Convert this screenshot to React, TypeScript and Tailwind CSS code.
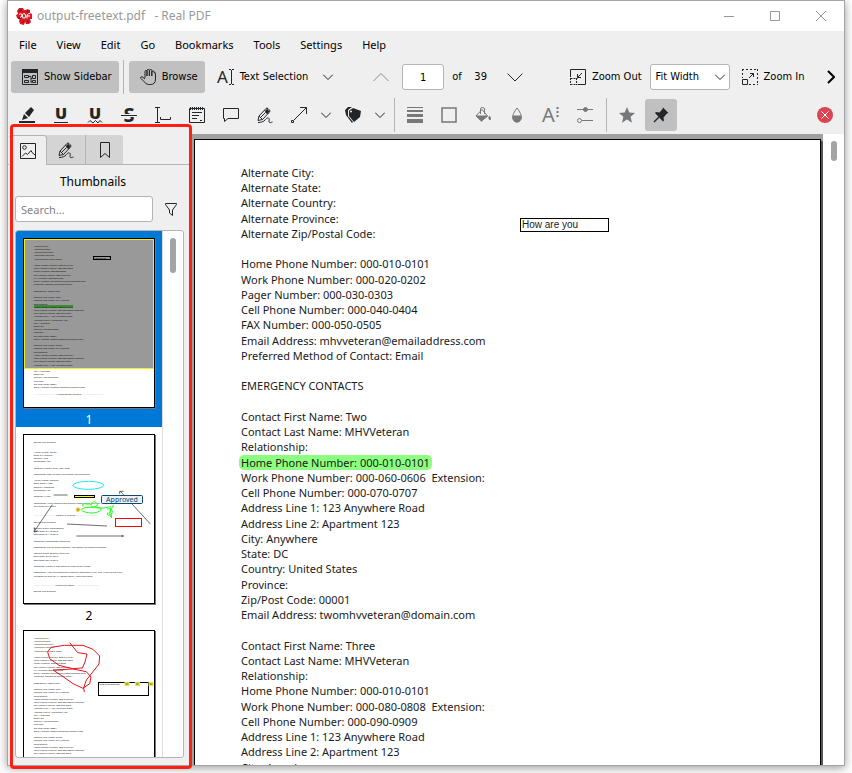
import type { ReactNode } from 'react';

const MENU = ['File', 'View', 'Edit', 'Go', 'Bookmarks', 'Tools', 'Settings', 'Help'];

const HIGHLIGHTED_LINE = 19;

const CONTACT_LINES = [
    'Alternate City:',
    'Alternate State:',
    'Alternate Country:',
    'Alternate Province:',
    'Alternate Zip/Postal Code:',
    '',
    'Home Phone Number: 000-010-0101',
    'Work Phone Number: 000-020-0202',
    'Pager Number: 000-030-0303',
    'Cell Phone Number: 000-040-0404',
    'FAX Number: 000-050-0505',
    'Email Address: mhvveteran@emailaddress.com',
    'Preferred Method of Contact: Email',
    '',
    'EMERGENCY CONTACTS',
    '',
    'Contact First Name: Two',
    'Contact Last Name: MHVVeteran',
    'Relationship:',
    'Home Phone Number: 000-010-0101',
    'Work Phone Number: 000-060-0606  Extension:',
    'Cell Phone Number: 000-070-0707',
    'Address Line 1: 123 Anywhere Road',
    'Address Line 2: Apartment 123',
    'City: Anywhere',
    'State: DC',
    'Country: United States',
    'Province:',
    'Zip/Post Code: 00001',
    'Email Address: twomhvveteran@domain.com',
    '',
    'Contact First Name: Three',
    'Contact Last Name: MHVVeteran',
    'Relationship:',
    'Home Phone Number: 000-010-0101',
    'Work Phone Number: 000-080-0808  Extension:',
    'Cell Phone Number: 000-090-0909',
    'Address Line 1: 123 Anywhere Road',
    'Address Line 2: Apartment 123',
    'City: Anywhere',
    'State: DC',
    'Country: United States',
    'Province:',
    'Zip/Post Code: 00001',
    'Email Address: threemhvveteran@domain.com',
];

// [baseline, text] pairs for the second page preview
const ALLERGY_LINES: [number, string][] = [
    [24, 'Source: Self-Entered'],
    [54, 'Allergy Name: Pollen'],
    [63, 'Date:          04/10/2010'],
    [72, 'Severity:     Mild'],
    [81, 'Diagnosed:   Yes'],
    [102, 'Reaction: Watery eyes, itchy nose'],
    [120, 'Comments: Took an over the counter antihistamine'],
    [138, 'Allergy Name: Peanuts'],
    [147, 'Date:          06/01/1980'],
    [159, 'Severity:     Moderate'],
    [168, 'Diagnosed:   Yes'],
    [186, 'Reaction: Hives'],
    [207, 'Comments: Avoid peanuts and peanut based foods, carry epi'],
    [216, 'and check the labels'],
    [243, '----------------------------- MEDICAL EVENTS -----------------------------'],
    [264, 'Source: Self-Entered'],
    [282, 'Medical Event:   Colonoscopy'],
    [291, 'Start Date:     01/12/2010'],
    [300, 'Stop Date:     01/12/2010'],
    [321, 'Response: Colonoscopy went well'],
    [339, 'Comments: Polyps were removed. The doctor did these exchanges'],
    [357, 'Medical Event:   Broken right arm'],
    [366, 'Start Date:     07/04/2012'],
    [378, 'Stop Date:     08/15/2012'],
    [396, 'Response: Placed in cast from my hand to my elbow'],
    [414, 'Comments: After the community hospital emergency visit, had X-rays at the clinic'],
    [426, 'Followed up with my VA doctor when I returned home'],
    [453, '---------------------------- IMMUNIZATIONS --------------------------------'],
    [471, 'Source: Self-Entered'],
];

function Icon({ children, className = 'text-[#232629]' }: { children: ReactNode; className?: string }) {
    return (
        <svg
            width="16"
            height="16"
            viewBox="0 0 16 16"
            fill="none"
            stroke="currentColor"
            aria-hidden="true"
            className={`shrink-0 overflow-visible font-['Noto_Sans',sans-serif] ${className}`}
        >
            {children}
        </svg>
    );
}

function Chevron({ up = false, muted = false }: { up?: boolean; muted?: boolean }) {
    return (
        <Icon className={muted ? 'text-[#8a8b8c]' : 'text-[#232629]'}>
            <path d={up ? 'M0.5 12 8 4.5 15.5 12' : 'M0.5 4.5 8 12 15.5 4.5'} />
        </Icon>
    );
}

function SmallChevron() {
    return (
        <svg width="10" height="6" viewBox="0 0 10 6" fill="none" stroke="#232629" aria-hidden="true">
            <path d="M0 0.5 5 5.5 10 0.5" />
        </svg>
    );
}

function AppLogo() {
    return (
        <svg width="17" height="17" viewBox="0 0 17 17" aria-hidden="true" className="shrink-0">
            <path
                d="M3 0h4l1 2h2l1-1 3 1v3l2 1v5h-2l1 3-2 2h-3l-1-2-1 3-4-1-1-3 1-2-3-1-1-3 2-1-1-3z"
                fill="#dc1822"
            />
            <path d="M3 3l3-1M11 3l2 1M2 10l3 1M13 14l-2-1M6 14l2 0" stroke="#9a0a14" strokeWidth="1.500" />
            <path
                d="M3 6.500q2-1.500 3 0T4 9.500M7 10.500q-1.500-4.500.5-5t2 2.500-2 2M11 10.500q-1-5 3-5M10.500 8H14"
                fill="none"
                stroke="#fff"
            />
        </svg>
    );
}

function PencilIcon() {
    return (
        <Icon>
            <path d="M1 13.500 2 9 9 1.500q1-1 2 0l1.500 1.500q1 1 0 2L5.500 12.500zM2 9l3.500 3.500M7.500 3l4 4M3.500 10.500l5-5" />
            <path d="M8 5 10 7 12.500 4.500 10 1.500z" fill="currentColor" stroke="none" />
            <path d="M1 15.500c3 0 6-1 7-2.500s3-3 4-1.500-1 3.500.5 4 2-.5 3-.5" />
        </Icon>
    );
}

function TitleBar() {
    return (
        <header className="flex h-[30px] shrink-0 items-center bg-white pl-2 text-[#999999]">
            <AppLogo />
            <h1 className="ml-1 text-[12px] leading-5 whitespace-pre">output-freetext.pdf   - Real PDF</h1>
            <div className="ml-auto flex h-full">
                <button type="button" aria-label="Minimize" className="flex w-[46px] items-center justify-center">
                    <svg width="10" height="10" fill="none" stroke="currentColor">
                        <path d="M0 5.500h10" />
                    </svg>
                </button>
                <button type="button" aria-label="Maximize" className="flex w-[46px] items-center justify-center">
                    <svg width="10" height="10" fill="none" stroke="currentColor">
                        <path d="M.5.500h9v9h-9z" />
                    </svg>
                </button>
                <button type="button" aria-label="Close" className="flex w-[46px] items-center justify-center">
                    <svg width="10" height="10" fill="none" stroke="currentColor">
                        <path d="M0 0 10 10M10 0 0 10" />
                    </svg>
                </button>
            </div>
        </header>
    );
}

function MenuBar() {
    return (
        <nav className="flex h-[27px] shrink-0 items-center pl-px">
            {MENU.map((item) => (
                <button key={item} type="button" className="px-[10px] text-[11px] leading-4">
                    {item}
                </button>
            ))}
        </nav>
    );
}

function Separator() {
    return (
        <div className="flex h-[34px] w-[6px] shrink-0 justify-center">
            <div className="w-px bg-[#b4b4b4]" />
        </div>
    );
}

function LabelButton({ icon, label, active = false }: { icon: ReactNode; label: string; active?: boolean }) {
    return (
        <button
            type="button"
            className={`flex h-8 shrink-0 items-center gap-[6px] rounded-[3px] pr-[7px] pl-[11px] whitespace-nowrap ${
                active ? 'bg-[#c0c0c0]' : ''
            }`}
        >
            {icon}
            {label}
        </button>
    );
}

function MainToolbar() {
    return (
        <div className="flex h-[38px] shrink-0 items-center gap-[2px] overflow-hidden pr-[5px] pl-[3px] font-['DejaVu_Sans_Condensed','Noto_Sans',sans-serif] text-[11px]">
            <LabelButton
                active
                label="Show Sidebar"
                icon={
                    <Icon>
                        <path d="M.5 .5h15v15H.5z" />
                        <path d="M0 0h16v4H0z" fill="currentColor" stroke="none" />
                        <path d="M2.500 6.500h4v2h-4zM2.500 11.500h4v2h-4zM7 7.500h2v6M9 9.500h1M9 13h1" />
                        <path d="M10.500 6.500h3v3h-3zM10.500 11.500h3v2h-3z" />
                    </Icon>
                }
            />
            <Separator />
            <LabelButton
                active
                label="Browse"
                icon={
                    <Icon>
                        <path d="M5 9V2.500q0-1 1-1t1 1V7M7 7V1.500q0-1 1.200-1t1.200 1V7M9.400 7V1.500q0-1 1.200-1t1.200 1V7M11.800 7V3q0-1 1.200-1t1.200 1v1q1.300-1 1.300.5V10q0 5.500-5 5.500H8.500Q6 15.500 4 12.500L1 9.500q-1-1 0-1.500t2 .3L5 10" />
                    </Icon>
                }
            />
            <LabelButton
                label="Text Selection"
                icon={
                    <Icon>
                        <text x="-1" y="14" fontSize="17" fill="currentColor" stroke="none">
                            A
                        </text>
                        <path d="M11 .5h2M14 .5h2M13.500 1v14M11 15.500h2M14 15.500h2" />
                    </Icon>
                }
            />
            <button type="button" aria-label="Selection tools" className="flex h-8 w-[22px] items-center justify-center">
                <SmallChevron />
            </button>

            <div className="ml-6 flex items-center">
                <button type="button" aria-label="Previous page" className="flex size-8 items-center justify-center">
                    <Chevron up muted />
                </button>
                <input
                    aria-label="Page"
                    defaultValue="1"
                    className="ml-[5px] h-[26px] w-[42px] rounded-[3px] border border-[#b4b4b4] bg-white text-center"
                />
                <span className="ml-2 whitespace-pre">of    39</span>
                <button type="button" aria-label="Next page" className="ml-3 flex size-8 items-center justify-center">
                    <Chevron />
                </button>
            </div>

            <div className="ml-[26px] flex items-center">
                <LabelButton
                    label="Zoom Out"
                    icon={
                        <Icon>
                            <path d="M.5 8V.5h15v15H8" />
                            <path d="M.5 9.500h7M.5 15.500h7M.5 9v7M6.500 9v7" strokeDasharray="2 1" />
                            <path d="M12 4 7.500 8.500M7.500 5v3.500H11" />
                        </Icon>
                    }
                />
                <div className="relative mx-px">
                    <select
                        aria-label="Zoom"
                        className="h-[26px] w-20 appearance-none rounded-[3px] border border-[#b4b4b4] bg-white pl-[5px] text-[11px]"
                    >
                        <option>Fit Width</option>
                        <option>Fit Page</option>
                        <option>100%</option>
                    </select>
                    <span className="pointer-events-none absolute top-[10px] right-[5px]">
                        <SmallChevron />
                    </span>
                </div>
                <LabelButton
                    label="Zoom In"
                    icon={
                        <Icon>
                            <path d="M0 .5h16M15.500 0v16M.5 0v9M7 15.500h9" strokeDasharray="2 2" />
                            <path d="M.5 10.500h5v5h-5zM7 9l4.500-4.500M8 4.500h3.500V8" />
                        </Icon>
                    }
                />
            </div>
            <button type="button" aria-label="More" className="ml-auto flex size-4 items-center justify-center">
                <svg width="8" height="14" viewBox="0 0 8 14" fill="none" stroke="#000" strokeWidth="2">
                    <path d="M1 1 7 7 1 13" />
                </svg>
            </button>
        </div>
    );
}

function ToolButton({ label, active = false, children }: { label: string; active?: boolean; children: ReactNode }) {
    return (
        <button
            type="button"
            aria-label={label}
            className={`flex size-8 shrink-0 items-center justify-center rounded-[3px] ${active ? 'bg-[#c0c0c0]' : ''}`}
        >
            {children}
        </button>
    );
}

function AnnotationToolbar() {
    const muted = 'text-[#76787a]';
    return (
        <div className="flex h-[38px] shrink-0 items-center gap-[2px] pr-[11px] pl-[3px]">
            <ToolButton label="Highlighter">
                <Icon>
                    <path d="M0 15h16" strokeWidth="2" />
                    <path d="M6 6 12 0l3 3-5 7z" fill="currentColor" stroke="none" />
                    <path d="M5 7l4 4-3 1-3 1z" fill="currentColor" stroke="none" />
                </Icon>
            </ToolButton>
            <ToolButton label="Underline">
                <Icon>
                    <text x="8" y="12" textAnchor="middle" fontSize="16" fontWeight="900" fill="currentColor" stroke="none">
                        U
                    </text>
                    <path d="M1 15.500h14" />
                </Icon>
            </ToolButton>
            <ToolButton label="Squiggle">
                <Icon>
                    <text x="8" y="12" textAnchor="middle" fontSize="16" fontWeight="900" fill="currentColor" stroke="none">
                        U
                    </text>
                    <path d="M1 15.500l2-2 3 2.500 2.500-2.500L11 16l2-2.500 2 2" />
                </Icon>
            </ToolButton>
            <ToolButton label="Strike out">
                <Icon>
                    <text x="8" y="15" textAnchor="middle" fontSize="20" fontWeight="700" fill="currentColor" stroke="none">
                        S
                    </text>
                    <path d="M0 8.500h16" stroke="#efefef" strokeWidth="3" />
                    <path d="M0 8.500h16" />
                </Icon>
            </ToolButton>
            <ToolButton label="Typewriter">
                <Icon>
                    <path d="M0 .5h5M0 15.500h5M2.500 1v14M5.500 10v2.500h10V10" />
                </Icon>
            </ToolButton>
            <ToolButton label="Inline note">
                <Icon>
                    <path d="M.5 1.500h15v14H.5z" />
                    <path d="M1 1.500h14" strokeWidth="3" strokeDasharray="1 1" />
                    <path d="M3 5.500h10M3 8.500h7M3 11.500h5M11 13.500h2" />
                </Icon>
            </ToolButton>
            <ToolButton label="Pop-up note">
                <Icon>
                    <path d="M.5 1.500h15v10H5l-3.500 3v-3h-1z" />
                </Icon>
            </ToolButton>
            <ToolButton label="Freehand line">
                <PencilIcon />
            </ToolButton>
            <ToolButton label="Arrow">
                <Icon>
                    <path d="M.5 13.500h2v2h-2zM3 13 15.500.5M9 .5h6.500V7" />
                </Icon>
            </ToolButton>
            <button type="button" aria-label="Line shapes" className="flex h-8 w-[18px] items-center justify-center">
                <SmallChevron />
            </button>
            <ToolButton label="Stamp">
                <Icon>
                    <path d="M0 3 3 0h4L3 3v6l5 6-1 1-6-8z" fill="currentColor" stroke="none" />
                    <path d="M4 3.500 8 1l8 3-1 6-6 5-5-6z" fill="currentColor" stroke="none" />
                    <path d="M3.500 9.500V3.500L8 .5" stroke="#efefef" strokeWidth=".6" />
                    <circle cx="6" cy="4.500" r="1" fill="#efefef" stroke="none" />
                </Icon>
            </ToolButton>
            <button type="button" aria-label="Stamps" className="flex h-8 w-[18px] items-center justify-center">
                <SmallChevron />
            </button>
            <Separator />
            <ToolButton label="Line width">
                <Icon className={muted}>
                    <path d="M0 .5h16" />
                    <path d="M0 4h16" strokeWidth="2" />
                    <path d="M0 8.500h16" strokeWidth="3" />
                    <path d="M0 14h16" strokeWidth="4" />
                </Icon>
            </ToolButton>
            <ToolButton label="Color">
                <Icon className={muted}>
                    <path d="M1 1h14v14H1z" strokeWidth="1.500" />
                </Icon>
            </ToolButton>
            <ToolButton label="Inner color">
                <Icon className={muted}>
                    <path d="M5.500 7V2q0-1.500 2-1.500t2 1.500v5M7 2.500 1 9l5.500 5 6-5z" />
                    <path d="M1 9h11.500l-6 5z" fill="currentColor" />
                    <path d="M14.500 9q-1.500 3 0 3.500t1-1z" fill="currentColor" />
                </Icon>
            </ToolButton>
            <ToolButton label="Opacity">
                <Icon className={muted}>
                    <path d="M8 1Q3.500 7 3.500 10.500a4.500 4.500 0 0 0 9 0Q12.500 7 8 1z" />
                    <path d="M4 8.500h8v3q-1 4-4 4t-4-4z" fill="currentColor" stroke="none" />
                </Icon>
            </ToolButton>
            <ToolButton label="Font">
                <Icon className={muted}>
                    <text x="-1" y="15" fontSize="20" fill="currentColor" stroke="none">
                        A
                    </text>
                    <path d="M14.500 0v12" strokeWidth="2" strokeDasharray="2 2" />
                </Icon>
            </ToolButton>
            <ToolButton label="Settings">
                <Icon className={muted}>
                    <path d="M0 2.500h16M5 13.500h11" />
                    <circle cx="8.500" cy="2.500" r="2" fill="currentColor" />
                    <circle cx="2.500" cy="13.500" r="2" />
                </Icon>
            </ToolButton>
            <Separator />
            <ToolButton label="Favorite">
                <Icon className={muted}>
                    <path
                        d="M8 0l2.300 5.600 5.700.4-4.400 3.800 1.400 6L8 12.500 3 15.800l1.400-6L0 6l5.700-.4z"
                        fill="currentColor"
                        stroke="none"
                    />
                </Icon>
            </ToolButton>
            <ToolButton label="Keep tool selected" active>
                <Icon>
                    <path d="M10 .5 15.500 6l-1.500.5-3.500 4 .5 3-1 1L2 6l1-1 3.500.5L9.500 2z" fill="currentColor" stroke="none" />
                    <path d="M6 10 1 15" strokeWidth="1.500" />
                </Icon>
            </ToolButton>
            <button type="button" aria-label="Close toolbar" className="ml-auto size-4">
                <Icon>
                    <circle cx="8" cy="8" r="8" fill="#da4453" stroke="none" />
                    <path d="M4.500 4.500l7 7M11.500 4.500l-7 7" stroke="#fff" />
                </Icon>
            </button>
        </div>
    );
}

function ThumbnailText({ lines }: { lines: string[] }) {
    return (
        <g fontSize="7" fill="#222">
            {lines.map((line, i) => (
                <text key={i} x="30" y={24 + Math.round(i * 9.64)}>
                    {line}
                </text>
            ))}
        </g>
    );
}

function PageOne() {
    return (
        <>
            <rect x="31" y="199" width="117" height="9" fill="#5fe850" />
            <ThumbnailText lines={CONTACT_LINES} />
            <text x="30" y="470" fontSize="7" fill="#222">
                ----------------------------- ALLERGIES/REACTIONS -----------------------------
            </text>
            <rect x="2.500" y="2.500" width="387" height="387" fill="#000" fillOpacity=".4" stroke="#eeee22" strokeWidth="3" />
            <rect x="209.500" y="53.500" width="51" height="9" fill="#999" stroke="#000" strokeWidth="3" />
            <text x="212" y="60" fontSize="6">
                How are you
            </text>
        </>
    );
}

function PageTwo() {
    return (
        <>
            <g fontSize="7" fill="#222" className="whitespace-pre">
                {ALLERGY_LINES.map(([y, line]) => (
                    <text key={y} x="30" y={y}>
                        {line}
                    </text>
                ))}
            </g>
            <ellipse cx="194" cy="152" rx="46" ry="12" fill="none" stroke="#22e6f2" strokeWidth="3" />
            <rect x="151" y="181" width="63" height="9" fill="#000" />
            <path d="M154 185.500h57" stroke="#ff0" strokeWidth="3" />
            <path
                d="M90 181h42M130 268l120 6M158 304h138M294 301l6 3-6 3M86 210 32 290M32 278v14l10-4M380 268 290 170M300 170h-12v8"
                fill="none"
                stroke="#222"
                strokeWidth="2"
            />
            <circle cx="163" cy="225" r="6" fill="#b9a95a" stroke="#fd3" strokeWidth="3" />
            <path
                d="M172 225q10-10 40-6t50-3M178 216q-4-12 10-8h16q6-12 14-4t-4 12-12-8M174 228q24 12 48 4t-6-16M250 224q6-6 14 2t-4 14-8-6M270 210l-14 26q4 8 8 14l-4-30"
                fill="none"
                stroke="#2f2"
                strokeWidth="3"
            />
            <rect x="275.500" y="251.500" width="78" height="24" fill="none" stroke="#f00" strokeWidth="3" />
            <rect x="233.500" y="182.500" width="123" height="24" rx="3" fill="#eaf3f8" stroke="#12466b" strokeWidth="3" />
            <text x="295" y="201" textAnchor="middle" fontSize="21" fill="#12466b">
                Approved
            </text>
        </>
    );
}

function PageThree() {
    return (
        <>
            <ThumbnailText lines={CONTACT_LINES} />
            <path
                d="M138 36l24 30 28 4-6 24-8 18-30 2-40-10-28-20-6-20 10-14 40-6 56 0 30 12 20 20-2 24-14 18-24 30-8 24 2 12M88 118l60-3 40 8 14 16-4 20-20 14-30-14-34-24z"
                fill="none"
                stroke="#e8141c"
                strokeWidth="3"
            />
            <rect x="224.500" y="155.500" width="150" height="39" fill="#fff" stroke="#000" strokeWidth="3" />
            <text x="227" y="163" fontSize="6">
                What is the question?
            </text>
            {[310, 341, 382].map((x) => (
                <rect key={x} x={x - 6} y="155" width="12" height="10" fill="#a9a46c" stroke="#f2ee30" strokeWidth="3" />
            ))}
        </>
    );
}

function Thumbnail({ page, selected = false, children }: { page: number; selected?: boolean; children: ReactNode }) {
    return (
        <li className={`h-[196px] shrink-0 pt-[7px] text-center ${selected ? 'bg-[#0078d7] text-white' : 'text-black'}`}>
            <div className="mx-auto h-[170px] w-[132px] border border-black bg-white shadow-[1px_1px_0_#777777]">
                <svg
                    viewBox="1 1 390 504"
                    className="block size-full font-['Noto_Sans',sans-serif]"
                    role="img"
                    aria-label={`Page ${page}`}
                >
                    {children}
                </svg>
            </div>
            <p className="pt-1 text-[12px] leading-4">{page}</p>
        </li>
    );
}

function Sidebar() {
    return (
        <aside className="relative flex w-[184px] shrink-0 flex-col pb-[7px]">
            <div role="tablist" className="mr-[2px] flex h-[31px] shrink-0 items-end border-b border-[#b4b4b4] pl-px">
                <button
                    type="button"
                    role="tab"
                    aria-label="Thumbnails"
                    aria-selected="true"
                    className="-mb-px flex h-[30px] w-[38px] items-center justify-center rounded-t-[3px] border-t border-r border-[#b4b4b4] bg-[#efefef]"
                >
                    <Icon>
                        <path d="M.5 .5h15v15H.5z" />
                        <circle cx="4.500" cy="4.500" r="1.800" />
                        <path d="M2 13.500l3.500-3.500 2 1.500 3.500-4 1 2 3 2.500" />
                    </Icon>
                </button>
                <button
                    type="button"
                    role="tab"
                    aria-label="Annotations"
                    className="flex h-[29px] w-[39px] items-center justify-center border-r border-[#b4b4b4] bg-[#d4d4d4]"
                >
                    <PencilIcon />
                </button>
                <button
                    type="button"
                    role="tab"
                    aria-label="Bookmarks"
                    className="flex h-[29px] w-[37px] items-center justify-center rounded-tr-[3px] bg-[#d4d4d4]"
                >
                    <Icon>
                        <path d="M3.500 .5h9v15L8 11.500l-4.500 4z" />
                    </Icon>
                </button>
            </div>
            <h2 className="h-[31px] pr-[14px] text-center text-[12px] leading-[33px]">Thumbnails</h2>
            <div className="flex items-center pl-[7px]">
                <input
                    type="search"
                    aria-label="Search"
                    placeholder="Search..."
                    className="h-[26px] w-[138px] rounded-[3px] border border-[#b4b4b4] bg-white px-[5px] text-[11px] placeholder:text-[#808284]"
                />
                <button type="button" aria-label="Filter" className="ml-[10px] flex size-4 items-center justify-center">
                    <svg width="12" height="13" viewBox="0 0 12 13" fill="none" stroke="#232629" aria-hidden="true">
                        <path d="M.5.500h11v1L7.500 7v5.500l-3-2.500V7L.5 1.500z" />
                    </svg>
                </button>
            </div>
            <div className="mt-2 mr-2 ml-[7px] flex min-h-0 flex-1 overflow-hidden rounded-[3px] border border-[#b4b4b4] bg-white">
                <ul className="flex w-[147px] flex-col border-r border-[#dedede]">
                    <Thumbnail page={1} selected>
                        <PageOne />
                    </Thumbnail>
                    <Thumbnail page={2}>
                        <PageTwo />
                    </Thumbnail>
                    <Thumbnail page={3}>
                        <PageThree />
                    </Thumbnail>
                </ul>
                <div className="flex-1 pt-[7px]">
                    <div className="mx-auto h-[35px] w-[6px] rounded-full bg-[#a4a4a4]" />
                </div>
            </div>
            <div className="pointer-events-none absolute -top-[10px] right-0 -bottom-1 left-[2px] z-10 rounded-[4px] border-3 border-[#ff2015]" />
        </aside>
    );
}

function Document() {
    return (
        <main className="flex min-w-0 flex-1 overflow-hidden bg-white">
            <div className="flex min-w-0 flex-1 bg-[#a0a0a0] pt-[5px] pr-[2px] pl-[2px]">
                <article className="relative flex-1 border border-b-0 border-black bg-white pt-[25px] pl-[46px] text-[11px] leading-[15px] text-[#1a1a1a] shadow-[2px_2px_0_#555555]">
                    {CONTACT_LINES.map((line, i) => (
                        <p key={i} className="min-h-[15px] whitespace-pre nth-[4n+3]:mb-px">
                            {i === HIGHLIGHTED_LINE ? (
                                <mark className="-mx-[2px] rounded-[5px] bg-[#8cff80] px-[2px] text-inherit">{line}</mark>
                            ) : (
                                line
                            )}
                        </p>
                    ))}
                    <div className="absolute top-[78px] left-[325px] h-[14px] w-[89px] border border-black pl-px font-['Liberation_Sans',Arial,sans-serif] text-[10px] leading-3">
                        How are you
                    </div>
                </article>
            </div>
            <div className="w-[21px] shrink-0 pt-[7px]">
                <div className="ml-2 h-5 w-[6px] rounded-full bg-[#a4a4a4]" />
            </div>
        </main>
    );
}

export default function App() {
    return (
        <div className="h-screen overflow-hidden bg-white px-[7px] pb-[7px] font-['Noto_Sans',sans-serif] text-black">
            <div className="flex h-full flex-col border border-[#a4a4a4] bg-[#efefef] shadow-[0_2px_9px_rgba(0,0,0,0.4)]">
                <TitleBar />
                <MenuBar />
                <MainToolbar />
                <AnnotationToolbar />
                <div className="flex min-h-0 flex-1">
                    <Sidebar />
                    <Document />
                </div>
            </div>
        </div>
    );
}
